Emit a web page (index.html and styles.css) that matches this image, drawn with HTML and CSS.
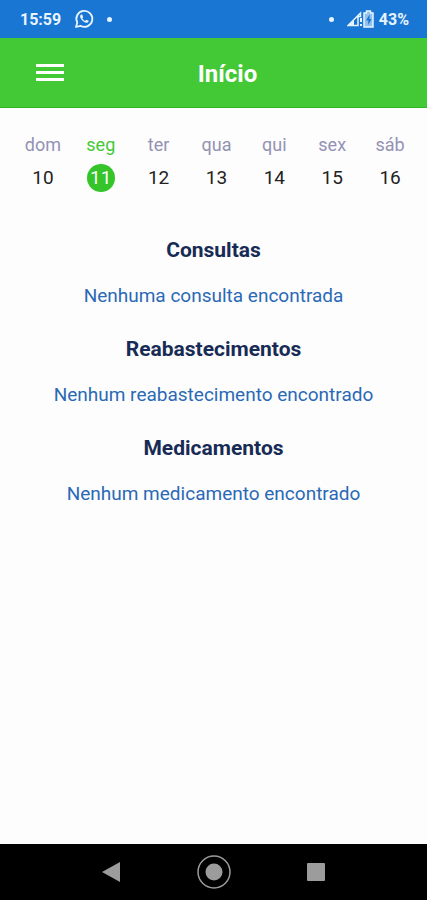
FILE: index.html
```
<!DOCTYPE html>
<html lang="pt-BR">
  <head>
    <meta charset="utf-8">
    <meta name="viewport" content="width=device-width, initial-scale=1">
    <title>Início</title>
    <link rel="stylesheet" href="styles.css">
  </head>
  <body>
    <div class="status-bar">
      <div class="status-left">
        <span>15:59</span>
        <svg class="whatsapp" viewBox="0 0 20 20" width="20" height="20">
          <path d="M2 18l1.300-4.400A8 8 0 1 1 6.400 16.800z" fill="none" stroke="#e8f4ff" stroke-width="1.800" stroke-linejoin="round"/>
          <path d="M7 5.500c-1.300 1-1.200 2.700.3 4.800 1.700 2.300 3.800 3.700 5.700 3.500 1.100-.2 1.700-1 1.600-2l-2.300-1.100-1.200 1.200c-1.200-.5-2.200-1.400-2.800-2.600l.9-1.100L8.200 5.500z" fill="#e8f4ff"/>
        </svg>
        <span class="dot"></span>
      </div>
      <div class="status-right">
        <span class="dot"></span>
        <div class="signals">
          <svg viewBox="0 0 16 16" width="16" height="16">
            <path d="M1 14.500L13.500 2v3.500h-2.500v9z" fill="none" stroke="#e8f4ff" stroke-width="1.500"/>
            <path d="M1 15L7 9v6z" fill="#e8f4ff"/>
            <path d="M13 7h2v4h-2zM13 13h2v2h-2z" fill="#e8f4ff"/>
          </svg>
          <svg viewBox="0 0 11 18" width="11" height="18">
            <path d="M3.500 1h4v2H10v14H1V3h2.500z" fill="#8fc0ee" stroke="#e8f4ff" stroke-width="1.500"/>
            <path d="M6.500 4.500L3 10.500h2.300v4.500L8.500 9H6.500z" fill="#1976d2"/>
          </svg>
        </div>
        <span>43%</span>
      </div>
    </div>

    <header class="app-bar">
      <button class="menu-btn" type="button" aria-label="Menu">
        <svg viewBox="0 0 28 20" width="28" height="20">
          <path d="M0 1h28v3H0zM0 8h28v3H0zM0 15h28v3H0z" fill="#fff"/>
        </svg>
      </button>
      <h1>Início</h1>
    </header>

    <main>
      <div class="week">
        <button class="day" type="button"><span class="name">dom</span><span class="num">10</span></button>
        <button class="day active" type="button"><span class="name">seg</span><span class="num">11</span></button>
        <button class="day" type="button"><span class="name">ter</span><span class="num">12</span></button>
        <button class="day" type="button"><span class="name">qua</span><span class="num">13</span></button>
        <button class="day" type="button"><span class="name">qui</span><span class="num">14</span></button>
        <button class="day" type="button"><span class="name">sex</span><span class="num">15</span></button>
        <button class="day" type="button"><span class="name">sáb</span><span class="num">16</span></button>
      </div>

      <section>
        <h2>Consultas</h2>
        <p>Nenhuma consulta encontrada</p>
      </section>
      <section>
        <h2>Reabastecimentos</h2>
        <p>Nenhum reabastecimento encontrado</p>
      </section>
      <section>
        <h2>Medicamentos</h2>
        <p>Nenhum medicamento encontrado</p>
      </section>
    </main>

    <nav class="nav-bar">
      <button type="button" aria-label="Voltar">
        <svg viewBox="0 0 34 34" width="34" height="34"><path d="M7 17L25 7v20z" fill="#9c9c9c"/></svg>
      </button>
      <button type="button" aria-label="Tela inicial">
        <svg viewBox="0 0 34 34" width="34" height="34">
          <circle cx="17" cy="17" r="16" fill="none" stroke="#9c9c9c" stroke-width="1.500"/>
          <circle cx="17" cy="17" r="8.500" fill="#9c9c9c"/>
        </svg>
      </button>
      <button type="button" aria-label="Recentes">
        <svg viewBox="0 0 34 34" width="34" height="34"><rect x="8" y="8" width="18" height="18" rx="1" fill="#9c9c9c"/></svg>
      </button>
    </nav>
  </body>
</html>
```

FILE: styles.css
```
* {
  box-sizing: border-box;
}

body {
  margin: 0;
  min-height: 100vh;
  display: flex;
  flex-direction: column;
  background-color: #fdfdfd;
  font-family: Roboto, sans-serif;
}

button {
  border: none;
  background: none;
  padding: 0;
  font-family: inherit;
  cursor: pointer;
}

svg {
  display: block;
}

.status-bar {
  display: flex;
  justify-content: space-between;
  height: 38px;
  padding: 0 18px 0 20px;
  background-color: #1976d2;
  color: #e8f4ff;
  font-size: 16px;
  font-weight: 700;
}

.status-left,
.status-right,
.signals {
  display: flex;
  align-items: center;
}

.status-left {
  gap: 13px;
}

.status-right {
  gap: 5px;
}

.status-right .dot {
  margin-right: 8px;
}

.dot {
  width: 5px;
  height: 5px;
  border-radius: 50%;
  background-color: #e8f4ff;
}

.app-bar {
  display: grid;
  grid-template-columns: 64px 1fr 36px;
  align-items: center;
  height: 70px;
  background-color: #43c935;
  border-bottom: 1px solid #32b526;
}

.menu-btn {
  justify-self: end;
}

h1 {
  margin: 0;
  padding-top: 2px;
  text-align: center;
  color: #fff;
  font-size: 24px;
  font-weight: 700;
}

main {
  flex: 1;
}

.week {
  display: grid;
  grid-template-columns: repeat(7, 1fr);
  padding: 25px 8px 0 14px;
  margin-bottom: 43px;
}

.day {
  display: flex;
  flex-direction: column;
  align-items: center;
  gap: 7px;
  font-size: 19px;
  line-height: 24px;
  color: #222;
}

.name {
  color: #9492b4;
  font-size: 18px;
}

.num {
  width: 28px;
  border-radius: 50%;
  line-height: 28px;
}

.active .name {
  color: #43c935;
}

.active .num {
  background-color: #35c429;
  color: #fff;
}

section {
  text-align: center;
  margin-bottom: 23px;
}

h2 {
  margin: 0 0 16px;
  color: #172b55;
  font-size: 21px;
  font-weight: 700;
  line-height: 30px;
}

p {
  margin: 0;
  color: #2a69b5;
  font-size: 19px;
  line-height: 30px;
}

.nav-bar {
  display: flex;
  justify-content: center;
  align-items: center;
  gap: 68px;
  height: 56px;
  background-color: #000;
}
```
